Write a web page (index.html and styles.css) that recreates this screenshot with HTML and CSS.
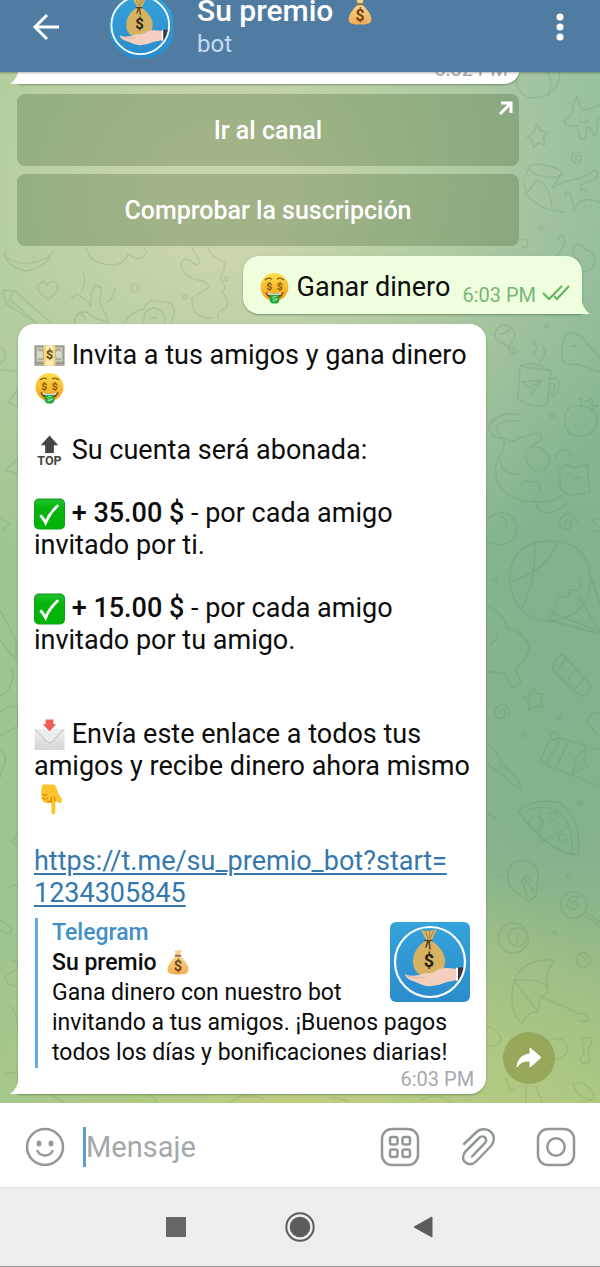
FILE: index.html
```html
<!DOCTYPE html>
<html lang="es">
<head>
    <meta charset="UTF-8">
    <meta name="viewport" content="width=device-width, initial-scale=1.0">
    <title>Su premio</title>
    <link rel="stylesheet" href="styles.css">
</head>
<body>
    <svg class="sprite" aria-hidden="true">
        <defs>
            <linearGradient id="gold" x1="0" y1="0" x2="0" y2="1">
                <stop offset="0" stop-color="#ffe04f"/>
                <stop offset="1" stop-color="#f29a17"/>
            </linearGradient>
            <linearGradient id="green" x1="0" y1="0" x2="0" y2="1">
                <stop offset="0" stop-color="#1fc52a"/>
                <stop offset="0.3" stop-color="#05b40c"/>
                <stop offset="1" stop-color="#02b407"/>
            </linearGradient>
            <linearGradient id="paper" x1="0" y1="0" x2="0" y2="1">
                <stop offset="0" stop-color="#f0f0f0"/>
                <stop offset="1" stop-color="#d6d6d6"/>
            </linearGradient>
            <linearGradient id="sack" x1="0" y1="0" x2="0" y2="1">
                <stop offset="0" stop-color="#fad68b"/>
                <stop offset="1" stop-color="#f0ac55"/>
            </linearGradient>
            <linearGradient id="sky" x1="0" y1="0" x2="0" y2="1">
                <stop offset="0" stop-color="#35a3dc"/>
                <stop offset="1" stop-color="#2b8ccc"/>
            </linearGradient>
        </defs>

        <symbol id="face" viewBox="0 0 32 32">
            <circle cx="16" cy="15" r="14.4" fill="url(#gold)"/>
            <path d="M6.500 7.500q3.500-3 6.500-.8M19 6.700q3-2.200 6.500.8" fill="none" stroke="#8a5a12" stroke-width="1.200" stroke-linecap="round"/>
            <ellipse cx="10.500" cy="14" rx="4" ry="4.800" fill="#f3b62a"/>
            <ellipse cx="21.500" cy="14" rx="4" ry="4.800" fill="#f3b62a"/>
            <text x="10.500" y="18" class="eye">$</text>
            <text x="21.500" y="18" class="eye">$</text>
            <path d="M6.500 20.500q9.500 3 19 0q-2.500 7-9.500 7t-9.500-7z" fill="#7c3d12"/>
            <path d="M8.500 21q7.500 2 15 0l-.8 1.600q-6.700 1.500-13.400 0z" fill="#fff"/>
            <path d="M11 23h10v5q0 4-5 4t-5-4z" fill="#25a63c"/>
            <path d="M18 25q-4-1-4 1t4 1.500t-4 2" fill="none" stroke="#a9ecad" stroke-width="1"/>
        </symbol>

        <symbol id="cash" viewBox="0 0 32 32">
            <rect x="0.500" y="5" width="31" height="21" fill="#8b8c80"/>
            <rect x="1.500" y="6" width="29" height="17" fill="#a9aa9b"/>
            <path d="M1.500 24.500h29" stroke="#b9baae" stroke-width="1"/>
            <rect x="3.500" y="8" width="25" height="13" fill="none" stroke="#d5d6c8" stroke-width="1"/>
            <ellipse cx="6.500" cy="14.500" rx="3" ry="4" fill="#d8d9cb"/>
            <ellipse cx="25.500" cy="14.500" rx="3" ry="4" fill="#d8d9cb"/>
            <rect x="10" y="5" width="12" height="21" fill="#f7d774"/>
            <rect x="12.500" y="5" width="7" height="21" fill="#fff0ba"/>
            <circle cx="16" cy="14.500" r="5" fill="#f4d983"/>
            <text x="16" y="19" class="note">$</text>
        </symbol>

        <symbol id="top" viewBox="0 0 32 32">
            <path d="M16 0l9 10h-4.500v8h-9v-8H7z" fill="#444"/>
            <text x="16" y="30" class="top-label">TOP</text>
        </symbol>

        <symbol id="check" viewBox="0 0 32 32">
            <rect x="0" y="0" width="32" height="32" rx="5" fill="#149a20"/>
            <rect x="1" y="1.200" width="30" height="30" rx="4" fill="url(#green)"/>
            <path d="M6.500 17.500q3 2.500 5.500 7.500q4-10 13-18" fill="none" stroke="#fff" stroke-width="3"/>
        </symbol>

        <symbol id="letter" viewBox="0 0 32 32">
            <rect x="0.500" y="9.500" width="31" height="22" rx="1" fill="url(#paper)"/>
            <path d="M1 31l10.500-10.500M31 31L20.500 20.500" stroke="#cfcfcf" stroke-width="1"/>
            <path d="M1 10l13 13.500q2 1.500 4 0L31 10" fill="#ececec" stroke="#b4b4b4" stroke-width="1"/>
            <path d="M12 0h8v5h3L16 12 9 5h3z" fill="#f35b59"/>
        </symbol>

        <symbol id="finger" viewBox="0 0 32 32">
            <path d="M9 1h11q2 0 3 3l2 6 3.500 5.500q1.500 4-2 4.500L22 18v12q0 2-2 2t-2-2V20q-7 1.500-9-2-2-3-1-6.500Q6.500 7 9 1z" fill="#fcc52c"/>
            <path d="M8.500 11q4 2.500 5 0M8.800 15q4 2.500 5 0M14 18.500q2.500 1 4-1M18 19v-5M22 18l-1-4.500" fill="none" stroke="#dd8b13" stroke-width="1.200" stroke-linecap="round"/>
        </symbol>

        <symbol id="bag" viewBox="0 0 28 32">
            <path d="M9.500 1.500q2 1.200 4.500 0t4.500 0l-1.800 6h-5.400z" fill="#f5cf8d"/>
            <path d="M11 9q3-1 6 0c3 3 10 10 10 16 0 5-4 6.500-13 6.500S1 30 1 25C1 19 8 12 11 9z" fill="url(#sack)"/>
            <rect x="10" y="7" width="8" height="2.500" rx="1" fill="#976e43"/>
            <text x="14" y="27" class="sack-sign">$</text>
        </symbol>

        <symbol id="logo" viewBox="0 0 80 80">
            <rect width="80" height="80" fill="url(#sky)"/>
            <path d="M31 8q8 2.500 16-1l-5 11h-6z" fill="#d9b366"/>
            <path d="M35 8l3 9M40 8l-1 9M44 8l-4 9" stroke="#a98341" stroke-width="1"/>
            <path d="M35 19h7c6 4 13 11 13 20 0 10-5 15-16 15S23 49 23 39c0-9 6-16 12-20z" fill="#d6b262"/>
            <path d="M35 18.500h7M38 19l-2 6M39 19l1 8" stroke="#54411f" stroke-width="1.500" stroke-linecap="round"/>
            <text x="39" y="45" class="logo-sign">$</text>
            <path d="M15 52q0 5 11 8 8 5 16 4 8-1 15-4l10-2V47q-12-2-18 0-6 5-14 4-9 4-18 2z" fill="#f4cfc0"/>
            <path d="M17 54q9 3 18 1" fill="none" stroke="#ddb09d" stroke-width="1"/>
            <path d="M66 46l2-.5v13l-2 .5z" fill="#fff"/>
            <path d="M68 45.500h6q0 7-3 13l-3 .5z" fill="#43333a"/>
            <circle cx="40" cy="40" r="35" fill="none" stroke="#fff" stroke-width="2.200"/>
        </symbol>
    </svg>

    <header class="header">
        <button class="icon-button back" aria-label="Atrás">
            <svg width="28" height="28" viewBox="0 0 28 28" fill="none" stroke="#fff" stroke-width="3"><path d="M27 14H3M15 2L3 14l12 12"/></svg>
        </button>
        <svg class="avatar" viewBox="2 2 76 76" aria-hidden="true"><use href="#logo"/></svg>
        <div class="chat-info">
            <h1 class="chat-title">Su premio <svg class="emoji" role="img" aria-label="💰"><use href="#bag"/></svg></h1>
            <div class="chat-status">bot</div>
        </div>
        <button class="icon-button more" aria-label="Más opciones">
            <svg width="10" height="28" viewBox="0 0 10 28" fill="#fff"><circle cx="5" cy="4" r="3.500"/><circle cx="5" cy="14" r="3.500"/><circle cx="5" cy="24" r="3.500"/></svg>
        </button>
    </header>

    <main class="chat">
        <svg class="doodles" viewBox="0 72 600 1031" preserveAspectRatio="xMaxYMax slice" aria-hidden="true">
            <!-- top, right side -->
            <path d="M518 72q-6 18 10 25 18 4 28-10 5-8 3-15M548 72q6 10 0 24"/>
            <path d="M577 97q3 10 6 13 8-1 18-6M577 97q-5 6-4 15-4 6-9 10 6 6 13 4 2 8 3 13h5l2-12q4 0 6 8 6 0 4-14l6-6M579 114h1M588 114h1M580 121q4 3 8 0"/>
            <path d="M537 124l4 7 7 1-5 6 2 7-7-2-4 5-2-8-5-3 6-4z"/>
            <path d="M577 160q-3-3 0-5 4-1 4 4-1 5-6 4-5-3-3-8 3-5 9-2"/>
            <path d="M529 168q4-6 14-3 16 2 19 8-4 6-16 4-14-2-17-9zM525 176l4-8M562 174l-10 13M524 182l2 12q10 12 24 16l14 2M552 188q14-8 28-10 10-4 14-8 6 2 2 8l-16 8M524 196l14-16q12 6 14 28M566 196q-2-8 4-2l4 12M580 192q2-6 8 0M574 212q2-14 18-12 8 0 10 6M584 207h1M590 206h1"/>
            <path d="M558 240q4-8 6-4 2 12-8 20l-10 6M520 240q6-4 8 4-2 6-6 2"/>
            <path d="M586 250q-8-10-13-2-2 8 7 12 0 10 4 12 10-2 11-12-2-10-9-10zM540 226a2 2 0 1 0 1 0"/>
            <!-- between the keyboard and the bubbles -->
            <path d="M5 251q-2 14 20 20 20-2 28-20M7 258q20 12 44-3M34 256v2"/>
            <path d="M86 248q4 14 18 16 20 4 24-10 10 8 16 2 4-4 0-9"/>
            <path d="M192 248l8 14q-4 6-10-2-12-2-8 8 4 10 16 12 12 2 10 8l-16 10q0 6 2 14 10 8 18 6M208 248q4 10 16 14 2 8-4 16 8 8 2 14 8 8 4 16-10 4-8 10"/>
            <path d="M48 299q-12-6-10-14 6-6 9 0 5-6 10-2 3 10-9 16z"/>
            <path d="M3 290l12 1 36 32M3 290l3 14 32 20M10 300l28 24M14 292l-6 10M226 277a2 2 0 1 0 1 0M134 284a4 4 0 1 0 1 0M184 295a2 2 0 1 0 1 0"/>
            <path d="M83 272q4 10-2 20M115 288q-2 12-8 14M71 298l6-4q10 6 14 12 0-20 6-20 8 0 2 14l10 22-14-4-8-6q-14 0-12 12M74 320q6-12 12 0"/>
            <path d="M124 323q8-12 20-14 4-12 16-7 12-2 14 8 0 8-4 14M144 324q-2-14 10-16 14 2 10 18M150 314v1M156 313v1M150 319q4-3 6 0"/>
            <!-- left margin -->
            <path d="M0 346q8 6 4 14l-4 4M0 370q12 0 18 2M8 402l10-12v18zM6 470l12-12v16zM0 518l10 6-8 6M0 610l16 30v20L0 640M12 668q4 20-12 28M0 712q10-8 18-4v18l-18 10M0 750q10 6 2 20l-2 8M18 832l-6 10 6 4M8 888q6-6 12 0M0 920l12 8-2 6-10-4M10 960q8 0 8 8l-12 8q-2 10 12 10M10 1006q8 8 8 24M6 1074l12-2v18M50 1094l14 9M150 1094l8 9M230 1103q10-12 34-4M330 1098q14 0 20 5M420 1100q18-8 30 2"/>
            <!-- right margin -->
            <path d="M498 328q6-6 14 0 6 8 0 14l-4 6q-4-6-10-6-6-8 0-14zM500 334q8 0 10-6M508 348l6 0 2 6-6-2zM546 324a2 2 0 1 0 1 0"/>
            <path d="M566 334q12-4 20 8l14 16M566 334q-6 12-3 28 6 4 14 2l23 8M572 346h4"/>
            <path d="M520 366l31 5-4 33q-14 6-29-5zM520 366q14-6 31 5M549 380q10-6 10 6-2 14-12 10M549 384q6-2 6 4-1 6-7 6M522 382l20-2-10 14-2-6zM530 388l12-8M532 342q10 6 0 12M542 344q6 10-2 18"/>
            <path d="M565 414q4-10 18-8 14 2 14 16-4 16-20 14-14-2-12-22zM582 406l-2-8 6 4 6-4 0 8 6 0-8 6M572 414h1M580 418h1M588 418h1M574 426h1M584 426h1"/>
            <path d="M520 415q-20-4-30 8-4 14 14 16 2 8-8 24-4 30 28 38 30 4 38-6M520 421q-18-2-24 6 2 12 18 14l8-4 14-4q8 2 4 8l-10 6M500 462q4 14 20 12M526 452q4-8 14-4 8 4 10 12-4 14-16 10-10-6-8-18M556 460q-2-10 10-10 8 4 4 10M560 468q6-6 14 0l14-4 0 14 2 14-12 2q-14 4-18-8zM566 474h4M576 478h4M520 486q4-8 12-4 10-2 8 10M535 500q4 16 16 12 12-2 16-10"/>
            <path d="M487 520q12-12 24-4 10 12 2 24-10 8-26 2M500 516q8 4 6 10M552 414a2 2 0 1 0 1 0"/>
            <path d="M566 525q-3-3 1-5 6 1 4 7-4 5-10 0-4-8 4-13 10-2 12 8M594 520l6-2M594 530l6 2M596 525l-3-4"/>
            <path d="M510 582q-2-38 36-41 40-2 44 34 2 42-40 46-36-2-40-39zM534 542q4 34-12 66M558 542q-10 28-48 40M580 578q4 14-10 12-2 10-12 6-2 12-8 24M590 574l10 30M578 596l22 36M550 612l50 20M548 620l52 14M494 578a2 2 0 1 0 1 0"/>
            <path d="M487 606q16 6 20 22 18 4 22 20-2 14-14 20l6 14-8 6-8-14-18-3M490 645q6-4 8-10"/>
            <path d="M555 660l8-6 28 32-6 10q-6 2-32-26zM566 658l-8 12M576 668l-8 12M584 678l-8 10"/>
            <path d="M534 688l3 6 7 0-4 7 3 6-7-1-7 4 0-8-6-5 7-2zM501 714q-2-5 2-5 5 4 0 9-6 2-8-4 0-9 8-9 8 2 6 10M558 716a2 2 0 1 0 1 0M524 733a2 2 0 1 0 1 0M554 732a4 4 0 1 0 1 0"/>
            <path d="M540 762l8-20 12-4 40 12M540 762l58 24M560 740l-14 24M568 742l-12 26M574 760l12-12-2 14 4 4-16 8 4-10zM586 722q8-14 14-8M587 722l10 12"/>
            <path d="M487 745q12 6 14 18 14 10 20 24-10 0-18-12-10-6-16-12M500 766l10 6M487 812l10 8"/>
            <path d="M518 811q18-14 42-8 22 16 18 52-30-2-60-44zM524 812q16-8 32-2 18 12 16 44M540 806v36M540 842l30-16M536 816a7 7 0 1 0 1 0M552 812a4 4 0 1 0 1 0M562 834a4 4 0 1 0 1 0M580 801a2 2 0 1 0 1 0"/>
            <path d="M508 880q-2-18 14-20 18 2 16 20l-2 16-8 6-6-6q-12-6-14-16zM522 880l6 18M524 878l10 14M522 880l4-4 4 4M513 855v1M525 851v1M536 854v1M500 876h2"/>
            <path d="M573 892a13 13 0 1 0 1 0M573 905q-2-4 2-4 6 4 0 8-8 0-8-6 2-8 12-6M586 912l14 10M583 914l17 12M568 875a2 2 0 1 0 1 0"/>
            <path d="M513 923a15 15 0 1 0 1 0M517 928a9 9 0 1 0 1 0M520 934q-5 0-3 3t0 5M554 931a2 2 0 1 0 1 0"/>
            <path d="M583 953a7 7 0 1 0 1 0M582 957q6 0 3 5"/>
            <path d="M554 960q-40-2-42 34-2 18 10 30 4-12 16-12 0-14 10-20-4-18 6-32zM514 980q22-2 34 6M514 980l24 32M540 996l40 18q8-2 8 6-4 4-8 0"/>
            <path d="M582 1038l8 0 2 6-4 4 2 14-8 2-2-6 4-4zM550 1040q16-6 18 10-6 14-18 6M487 1026q14 6 14 14-4 8-14 6M506 1078q4 18 8 10M573 1084q8-4 16 4 8 10 4 12-14 0-20-16zM526 1084v18M536 1086l6 17"/>
        </svg>

        <div class="message message-in">
            <div class="bubble bubble-wide">
                <time class="time">6:02 PM</time>
                <svg class="tail tail-left" viewBox="0 0 9 18"><path d="M9 0Q8 13 0 18H9z" fill="#fff"/></svg>
            </div>
        </div>

        <div class="keyboard">
            <button class="key">Ir al canal
                <svg class="key-link" width="14" height="14" viewBox="0 0 14 14" fill="none" stroke="#fff" stroke-width="3"><path d="M2 2h10v10M12 2L1 13"/></svg>
            </button>
            <button class="key">Comprobar la suscripción</button>
        </div>

        <div class="message message-out">
            <div class="bubble">
                <div class="text"><svg class="emoji" role="img" aria-label="🤑"><use href="#face"/></svg> Ganar dinero</div>
                <time class="time">6:03 PM</time>
                <svg class="ticks" width="28" height="18" viewBox="0 0 28 18" fill="none" stroke="#5fb460" stroke-width="2"><path d="M1 8l6 6L20 1M12 11l3 3L27 1"/></svg>
                <svg class="tail tail-right" viewBox="0 0 9 18"><path d="M0 0Q1 13 9 18H0z" fill="#effedd"/></svg>
            </div>
        </div>

        <div class="message message-in">
            <div class="bubble">
                <div class="text">
                    <p><svg class="emoji" role="img" aria-label="💵"><use href="#cash"/></svg> Invita a tus amigos y gana dinero <svg class="emoji" role="img" aria-label="🤑"><use href="#face"/></svg></p>
                    <p><svg class="emoji" role="img" aria-label="🔝"><use href="#top"/></svg> Su cuenta será abonada:</p>
                    <p><svg class="emoji" role="img" aria-label="✅"><use href="#check"/></svg> <b>+ 35.00 $</b> - por cada amigo invitado por ti.</p>
                    <p><svg class="emoji" role="img" aria-label="✅"><use href="#check"/></svg> <b>+ 15.00 $</b> - por cada amigo invitado por tu amigo.</p>
                    <p class="spaced"><svg class="emoji" role="img" aria-label="📩"><use href="#letter"/></svg> Envía este enlace a todos tus amigos y recibe dinero ahora mismo <svg class="emoji" role="img" aria-label="👇"><use href="#finger"/></svg></p>
                    <p><a class="link" href="https://t.me/su_premio_bot?start=1234305845">https://t.me/su_premio_bot?start=<wbr>1234305845</a></p>
                </div>
                <div class="preview">
                    <svg class="preview-image" viewBox="0 0 80 80" role="img" aria-label="Su premio"><use href="#logo"/></svg>
                    <div class="preview-site">Telegram</div>
                    <div class="preview-title">Su premio <svg class="emoji" role="img" aria-label="💰"><use href="#bag"/></svg></div>
                    <div>Gana dinero con nuestro bot invitando a tus amigos. ¡Buenos pagos todos los días y bonificaciones diarias!</div>
                </div>
                <time class="time">6:03 PM</time>
                <svg class="tail tail-left" viewBox="0 0 9 18"><path d="M9 0Q8 13 0 18H9z" fill="#fff"/></svg>
            </div>
            <button class="share" aria-label="Compartir">
                <svg width="26" height="22" viewBox="0 0 26 22"><path d="M14 1l11 9.500L14 20v-6Q5 13 1 20 2 8 14 7z" fill="#fff" stroke="#fff" stroke-linejoin="round"/></svg>
            </button>
        </div>
    </main>

    <form class="composer">
        <button type="button" class="icon-button" aria-label="Emoji">
            <svg width="40" height="40" viewBox="0 0 40 40" fill="none" stroke="#929899" stroke-width="2.500" stroke-linecap="round"><circle cx="20" cy="20" r="18"/><path d="M12.500 24q2.500 4.500 7.500 4.500t7.500-4.500"/><ellipse cx="14" cy="16.500" rx="1.200" ry="1.700" fill="#929899"/><ellipse cx="26" cy="16.500" rx="1.200" ry="1.700" fill="#929899"/></svg>
        </button>
        <input class="field" type="text" placeholder="Mensaje" aria-label="Mensaje">
        <div class="tools">
            <button type="button" class="icon-button" aria-label="Comandos">
                <svg width="40" height="40" viewBox="0 0 40 40" fill="none" stroke="#929899" stroke-width="2.500"><rect x="2" y="2" width="36" height="36" rx="10"/><rect x="10" y="10" width="7.500" height="7.500" rx="2"/><rect x="22.500" y="10" width="7.500" height="7.500" rx="2"/><rect x="10" y="22.500" width="7.500" height="7.500" rx="2"/><rect x="22.500" y="22.500" width="7.500" height="7.500" rx="2"/></svg>
            </button>
            <button type="button" class="icon-button" aria-label="Adjuntar">
                <svg width="40" height="40" viewBox="0 0 40 40" fill="none" stroke="#929899" stroke-width="2.500" stroke-linecap="round"><path d="M6 17L18.500 5C22 1.500 29 1 33 5s3.500 10 0 14L18 34.500c-3 3-7 3.500-10.500 1s-3-8 0-11L21 11c2-2 4.500-2 6-.5s1.500 4-.5 6L14 29.500"/></svg>
            </button>
            <button type="button" class="icon-button" aria-label="Cámara">
                <svg width="40" height="40" viewBox="0 0 40 40" fill="none" stroke="#929899" stroke-width="2.500"><rect x="2" y="2" width="36" height="36" rx="10"/><circle cx="20" cy="20" r="8.700"/></svg>
            </button>
        </div>
    </form>

    <nav class="system-bar">
        <button class="icon-button" aria-label="Recientes">
            <svg width="28" height="28" viewBox="0 0 28 28"><rect x="4" y="4" width="20" height="20" rx="1" fill="#666"/></svg>
        </button>
        <button class="icon-button" aria-label="Inicio">
            <svg width="30" height="30" viewBox="0 0 30 30"><circle cx="15" cy="15" r="13.700" fill="none" stroke="#5c5c5c" stroke-width="2"/><circle cx="15" cy="15" r="10.300" fill="#5c5c5c"/></svg>
        </button>
        <button class="icon-button" aria-label="Volver">
            <svg width="28" height="28" viewBox="0 0 28 28"><path d="M4 14L22 4v20z" fill="#5c5c5c" stroke="#5c5c5c" stroke-linejoin="round"/></svg>
        </button>
    </nav>
</body>
</html>
```
FILE: styles.css
```css
* {
    box-sizing: border-box;
}

body {
    margin: 0;
    height: 100vh;
    display: flex;
    flex-direction: column;
    font-family: Roboto, "Liberation Sans", sans-serif;
    color: #0c0c0c;
    background: #fff;
}

button {
    font: inherit;
    border: none;
    padding: 0;
    cursor: pointer;
}

.sprite {
    position: absolute;
    width: 0;
    height: 0;
}

.icon-button {
    display: flex;
    align-items: center;
    justify-content: center;
    flex: none;
    background: none;
}

.emoji {
    width: 31px;
    height: 32px;
    vertical-align: middle;
}

/* signs inside the drawings */
.eye,
.note,
.top-label,
.sack-sign,
.logo-sign {
    font-family: Roboto, sans-serif;
    font-weight: 700;
    text-anchor: middle;
}

.eye {
    font-size: 10px;
    fill: #7a5312;
}

.note {
    font-size: 13px;
    fill: #5d4a1d;
}

.top-label {
    font-size: 13px;
    fill: #444;
}

.sack-sign {
    font-size: 18px;
    fill: #70421c;
}

.logo-sign {
    font-size: 18px;
    fill: #251f14;
}

/* header */
.header {
    display: flex;
    align-items: center;
    flex: none;
    height: 72px;
    padding: 0 32px 19px;
    background: #507ca2;
    color: #fff;
    overflow: hidden;
    position: relative;
    z-index: 1;
    box-shadow: 0 1px 2px rgba(0, 0, 0, 0.3);
}

.avatar {
    flex: none;
    width: 66px;
    height: 66px;
    margin-left: 49px;
    border-radius: 50%;
}

.chat-info {
    flex: 1;
    margin-left: 22px;
}

.chat-title {
    margin: 0;
    font-size: 30px;
    font-weight: 500;
    line-height: 34px;
    white-space: nowrap;
}

.chat-title .emoji {
    width: 26px;
    height: 28px;
    margin: -4px 0 0 6px;
}

.chat-status {
    font-size: 24px;
    line-height: 32px;
    color: #c4dcf2;
}

.more {
    width: 16px;
}

/* chat */
.chat {
    flex: 1;
    min-height: 0;
    display: flex;
    flex-direction: column;
    justify-content: flex-end;
    gap: 10px;
    padding: 0 18px 9px;
    overflow: hidden;
    position: relative;
    background:
        radial-gradient(ellipse 420px 260px at 50% 100%, rgba(192, 206, 128, 0.9), rgba(190, 204, 128, 0)),
        radial-gradient(ellipse 460px 420px at 37% 12%, #c9d5ac 15%, rgba(190, 210, 164, 0)),
        linear-gradient(to right, #9cc590 5%, rgba(151, 192, 139, 0) 90%),
        linear-gradient(to bottom, #8fbd9b, #82b18e 50%, #84b18c 75%, #a7c584);
}

.doodles {
    position: absolute;
    inset: 0;
    width: 100%;
    height: 100%;
    fill: none;
    stroke: rgba(70, 118, 78, 0.16);
    stroke-width: 1.3;
    stroke-linejoin: round;
    stroke-linecap: round;
}

.message {
    position: relative;
    display: flex;
    align-items: flex-end;
    flex: none;
}

.bubble {
    position: relative;
    display: flex;
    background: #fff;
    border-radius: 16px;
    box-shadow: 0 1px 2px rgba(60, 90, 50, 0.5);
}

.message-in .bubble {
    flex-direction: column;
    width: 83%;
    padding: 15px 12px 4px 16px;
    border-bottom-left-radius: 0;
}

.message-in .bubble-wide {
    width: 89%;
}

.message-out {
    justify-content: flex-end;
}

.message-out .bubble {
    align-items: flex-end;
    padding: 15px 12px 11px 16px;
    background: #effedd;
    border-bottom-right-radius: 0;
}

.tail {
    position: absolute;
    bottom: 0;
    width: 9px;
    height: 18px;
}

.tail-left {
    left: -8px;
}

.tail-right {
    right: -8px;
}

.text {
    font-size: 27px;
    line-height: 32px;
}

.text p {
    margin: 0 0 31px;
}

.text p:last-child {
    margin-bottom: 0;
}

.text .spaced {
    margin-top: 62px;
}

.text b {
    font-weight: 500;
}

.text .emoji {
    margin: -6px 0 -4px;
}

.link {
    color: #3478ad;
    text-decoration-thickness: 2px;
    text-underline-offset: 3px;
}

.time {
    align-self: flex-end;
    font-size: 20px;
    line-height: 22px;
    color: #a4a9ae;
}

.message-out .time {
    margin: 0 6px -3px 12px;
    color: #78b578;
}

.keyboard {
    position: relative;
    display: grid;
    gap: 8px;
    width: 89%;
    margin-left: -1px;
}

.key {
    position: relative;
    height: 72px;
    border-radius: 8px;
    background: rgba(80, 110, 60, 0.33);
    color: #fff;
    font-size: 25px;
    font-weight: 500;
}

.key-link {
    position: absolute;
    top: 7px;
    right: 6px;
}

.share {
    display: flex;
    align-items: center;
    justify-content: center;
    flex: none;
    width: 52px;
    height: 52px;
    margin: 0 0 10px 17px;
    border-radius: 50%;
    background: #95a85c;
}

/* link preview */
.preview {
    margin: 9px 4px 0 1px;
    padding-left: 14px;
    border-left: 3px solid #6aabdf;
    font-size: 23px;
    line-height: 30px;
}

.preview-image {
    float: right;
    width: 80px;
    height: 80px;
    margin-top: 4px;
    border-radius: 6px;
}

.preview-site {
    color: #4190c8;
    font-weight: 500;
}

.preview-title {
    font-weight: 500;
}

.preview-title .emoji {
    width: 24px;
    height: 26px;
    margin: -4px 0 0 4px;
}

/* message field */
.composer {
    display: flex;
    align-items: center;
    flex: none;
    height: 84px;
    padding: 4px 24px 0 25px;
}

.field {
    flex: 1;
    min-width: 0;
    height: 40px;
    margin: 0 18px;
    padding: 0;
    border: none;
    border-left: 3px solid #5a9fd0;
    outline: none;
    background: none;
    font: inherit;
    font-size: 29px;
}

.field::placeholder {
    color: #a3a8ab;
    opacity: 1;
}

.tools {
    display: flex;
    gap: 38px;
}

.system-bar {
    display: flex;
    align-items: center;
    justify-content: center;
    flex: none;
    gap: 95px;
    height: 80px;
    border-top: 1px solid #dcdcdc;
    border-bottom: 1px solid #9b9b9b;
    background: #eee;
}
```
